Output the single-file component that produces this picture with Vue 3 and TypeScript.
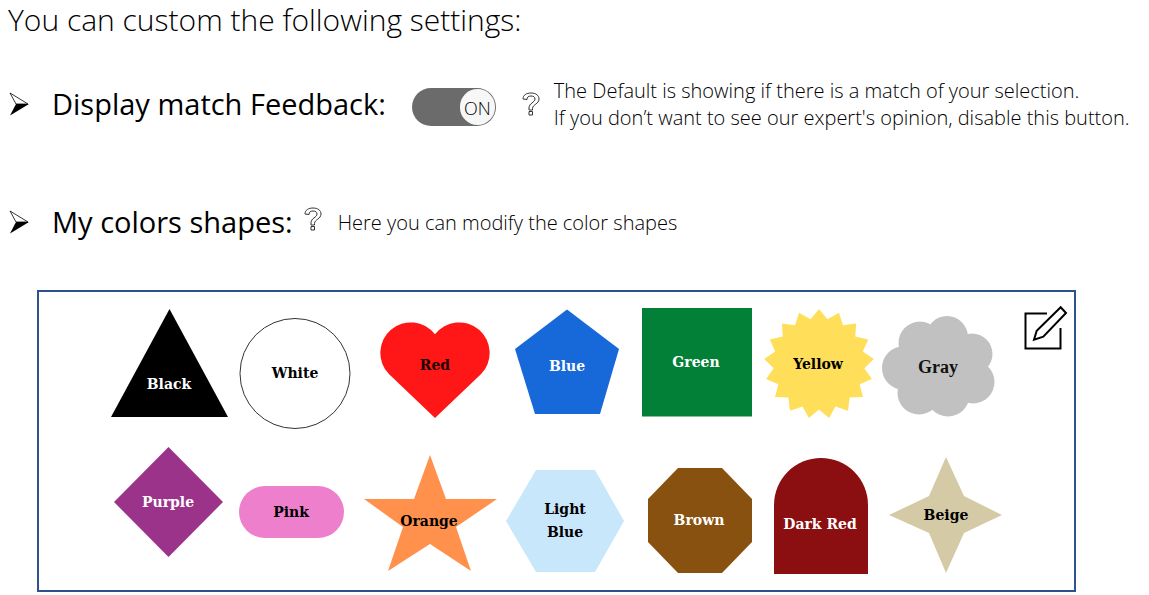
<script setup lang="ts">
import { ref } from 'vue'

interface Label {
  text: string
  x: number
  y: number
}

interface Swatch {
  name: string
  x: number
  y: number
  width: number
  path: string
  fill: string
  stroke?: string
  ink: string
  narrow?: boolean
  labels: Label[]
}

const matchFeedback = ref(true)
const rowHeight = 149

function burst(cx: number, cy: number, spikes: number, outer: number, inner: number): string {
  const points: string[] = []
  for (let i = 0; i < spikes * 2; i++) {
    const r = i % 2 === 0 ? outer : inner
    const a = (Math.PI * i) / spikes - Math.PI / 2
    points.push(`${(cx + r * Math.cos(a)).toFixed(1)} ${(cy + r * Math.sin(a)).toFixed(1)}`)
  }
  return `M${points.join('L')}Z`
}

function disc(cx: number, cy: number, r: number): string {
  return `M${cx - r} ${cy}a${r} ${r} 0 1 1 ${2 * r} 0a${r} ${r} 0 1 1 ${-2 * r} 0Z`
}

const cloud = [
  disc(815, 51, 21.5), disc(842, 45, 21), disc(867, 62, 20.5), disc(868, 90, 21.5),
  disc(843, 103, 21.5), disc(814, 101, 21.5), disc(799, 76, 22), disc(840, 76, 35),
].join('')

const swatches: Swatch[] = [
  { name: 'Black', x: 0, y: 0, width: 128, path: 'M64.5 17L123 125H6Z', fill: '#000000', ink: '#ffffff', labels: [{ text: 'Black', x: 64, y: 97 }] },
  { name: 'White', x: 128, y: 0, width: 124, path: disc(190, 81.5, 55), fill: '#ffffff', stroke: '#333333', ink: '#000000', labels: [{ text: 'White', x: 190, y: 86 }] },
  { name: 'Red', x: 252, y: 0, width: 144, path: 'M330 126L283.900 82.1A30.5 30.5 0 1 1 330 42.3A30.5 30.5 0 1 1 376.1 82.1Z', fill: '#ff1616', ink: '#1c0000', labels: [{ text: 'Red', x: 330, y: 78 }] },
  { name: 'Blue', x: 396, y: 0, width: 132, path: 'M462 17.5L514 57L495 122H430L410 57Z', fill: '#1768d8', ink: '#ffffff', labels: [{ text: 'Blue', x: 462, y: 79 }] },
  { name: 'Green', x: 528, y: 0, width: 126, path: 'M537 16H647V124.5H537Z', fill: '#038037', ink: '#ffffff', labels: [{ text: 'Green', x: 591, y: 75 }] },
  { name: 'Yellow', x: 654, y: 0, width: 118, path: burst(714, 72, 17, 55, 45.5), fill: '#ffde59', ink: '#000000', labels: [{ text: 'Yellow', x: 713, y: 77 }] },
  { name: 'Gray', x: 772, y: 0, width: 128, path: cloud, fill: '#c1c1c1', ink: '#111111', narrow: true, labels: [{ text: 'Gray', x: 833, y: 81 }] },
  { name: 'Purple', x: 0, y: 149, width: 128, path: 'M63.5 155L118 210L63.5 265L9 210Z', fill: '#9c338b', ink: '#ffffff', labels: [{ text: 'Purple', x: 63, y: 215 }] },
  { name: 'Pink', x: 128, y: 149, width: 124, path: 'M160 194H213A26 26 0 0 1 213 246H160A26 26 0 0 1 160 194Z', fill: '#ee7fcd', ink: '#000000', labels: [{ text: 'Pink', x: 186, y: 225 }] },
  { name: 'Orange', x: 252, y: 149, width: 144, path: 'M325 163L341 207H392L351 235L366 279L325 252L283 279L298 235L259 207H309Z', fill: '#ff914d', ink: '#000000', labels: [{ text: 'Orange', x: 324, y: 234 }] },
  { name: 'Light Blue', x: 396, y: 149, width: 132, path: 'M401 229L431 178H490L519 229L490 280H431Z', fill: '#c9e7fa', ink: '#000000', labels: [{ text: 'Light', x: 460, y: 222 }, { text: 'Blue', x: 460, y: 245 }] },
  { name: 'Brown', x: 528, y: 149, width: 126, path: 'M543 207L573 176H617L647 207V250L617 281H573L543 250Z', fill: '#885110', ink: '#ffffff', labels: [{ text: 'Brown', x: 594, y: 233 }] },
  { name: 'Dark Red', x: 654, y: 149, width: 118, path: 'M669 282V213A47 47 0 0 1 763 213V282Z', fill: '#8b0e10', ink: '#ffffff', labels: [{ text: 'Dark Red', x: 715, y: 237 }] },
  { name: 'Beige', x: 772, y: 149, width: 128, path: 'M841 165L859 204L897 223L859 241L841 281L824 241L784 223L824 204Z', fill: '#d4cba6', ink: '#000000', labels: [{ text: 'Beige', x: 841, y: 228 }] },
]
</script>

<template>
  <main class="page">
    <h1 class="title">You can custom the following settings:</h1>

    <section class="setting feedback">
      <svg class="bullet" viewBox="0 0 20 24" aria-hidden="true">
        <path d="M1 1L19 12H7Z" fill="#fff" stroke="#000" stroke-width="0.8" />
        <path d="M7 12H20L1 23.500Z" />
      </svg>
      <h2 class="name">Display match Feedback:</h2>
      <label class="switch">
        <input v-model="matchFeedback" class="switch-input" type="checkbox" role="switch" aria-label="Display match Feedback" />
        <span class="knob">{{ matchFeedback ? 'ON' : 'OFF' }}</span>
      </label>
      <button class="help" type="button" aria-label="Help: match feedback">
        <svg viewBox="0 0 18 24" aria-hidden="true">
          <path d="M1 7C1 3 4.500 1 9 1C14 1 17 3.500 17 7C17 12 10.500 12.500 10.500 16.500V18H7V16C7 11 13 10.500 13 7C13 5 11.500 4 9 4C6.500 4 5 5 5 7.500Z" />
          <path d="M7 19.500H10.500V23H7Z" />
        </svg>
      </button>
      <p class="note">
        The Default is showing if there is a match of your selection.<br />
        If you don’t want to see our expert's opinion, disable this button.
      </p>
    </section>

    <section class="setting colors">
      <svg class="bullet" viewBox="0 0 20 24" aria-hidden="true">
        <path d="M1 1L19 12H7Z" fill="#fff" stroke="#000" stroke-width="0.8" />
        <path d="M7 12H20L1 23.500Z" />
      </svg>
      <h2 class="name">My colors shapes:</h2>
      <button class="help" type="button" aria-label="Help: color shapes">
        <svg viewBox="0 0 18 24" aria-hidden="true">
          <path d="M1 7C1 3 4.500 1 9 1C14 1 17 3.500 17 7C17 12 10.500 12.500 10.500 16.500V18H7V16C7 11 13 10.500 13 7C13 5 11.500 4 9 4C6.500 4 5 5 5 7.500Z" />
          <path d="M7 19.500H10.500V23H7Z" />
        </svg>
      </button>
      <p class="note">Here you can modify the color shapes</p>
    </section>

    <section class="palette" aria-label="Color shapes">
      <div class="swatches">
        <svg
          v-for="s in swatches"
          :key="s.name"
          class="swatch"
          :viewBox="`${s.x} ${s.y} ${s.width} ${rowHeight}`"
        >
          <path :d="s.path" :fill="s.fill" :stroke="s.stroke ?? 'none'" />
          <text
            v-for="l in s.labels"
            :key="l.text"
            :x="l.x"
            :y="l.y"
            :fill="s.ink"
            :class="['label', { narrow: s.narrow }]"
          >{{ l.text }}</text>
        </svg>
      </div>
      <button class="edit" type="button" aria-label="Edit color shapes">
        <svg viewBox="0 0 46 46" aria-hidden="true">
          <path d="M25 8.500H3.500V43.500H38.500V23" />
          <path d="M38.700 2.300L44 8L21.300 31.700L12 34.700L14.700 25.700Z" />
        </svg>
      </button>
    </section>
  </main>
</template>

<style>
body {
  margin: 0;
  background: #fff;
}
</style>

<style scoped>
.page {
  color: #000;
  font-family: "Open Sans", "Noto Sans", sans-serif;
  font-weight: 300;
}

.title {
  margin: 0;
  padding-left: 8px;
  font-size: 30px;
  font-weight: 300;
  line-height: 40px;
}

.setting {
  display: flex;
  align-items: center;
  padding-left: 9px;
}

.feedback {
  min-height: 56px;
  margin-top: 36px;
}

.colors {
  min-height: 40px;
  margin-top: 70px;
}

.bullet {
  flex: none;
  width: 20px;
  height: 24px;
}

.name {
  margin: 0 0 0 23px;
  font-size: 29px;
  font-weight: 400;
  line-height: 40px;
  white-space: nowrap;
}

.switch {
  display: flex;
  flex: none;
  justify-content: flex-end;
  box-sizing: border-box;
  width: 84px;
  height: 38px;
  margin: 6px 0 0 26px;
  padding: 1px;
  border-radius: 19px;
  background: #6b6b6b;
  cursor: pointer;
}

.switch:not(:has(:checked)) {
  justify-content: flex-start;
}

.switch-input {
  width: 0;
  height: 0;
  margin: 0;
  appearance: none;
}

.knob {
  width: 35px;
  height: 36px;
  border-radius: 18px;
  background: #f7f7f7;
  font-size: 18px;
  line-height: 38px;
  text-align: center;
}

.help {
  flex: none;
  width: 18px;
  height: 24px;
  padding: 0;
  border: 0;
  background: none;
}

.feedback .help {
  margin-left: 26px;
}

.colors .help {
  margin: 0 2px 6px 11px;
}

.help svg {
  display: block;
  fill: #fff;
  stroke: #333;
  stroke-width: 1;
}

.note {
  margin: 0 0 0 14px;
  font-size: 20px;
  line-height: 27px;
}

.palette {
  display: flex;
  align-items: flex-start;
  margin: 48px 73px 0 37px;
  padding-left: 66px;
  border: 2px solid #2f528f;
}

.swatches {
  display: grid;
  flex: 1;
  grid-template-columns: 128fr 124fr 144fr 132fr 126fr 118fr 128fr;
}

.swatch {
  display: block;
  width: 100%;
}

.label {
  font-family: "DejaVu Serif", serif;
  font-size: 14px;
  font-weight: 700;
  text-anchor: middle;
}

.narrow {
  font-family: "Liberation Serif", serif;
  font-size: 18px;
}

.edit {
  flex: none;
  width: 46px;
  height: 46px;
  margin: 13px 6px 0 17px;
  padding: 0;
  border: 0;
  background: none;
}

.edit svg {
  display: block;
  fill: none;
  stroke: #000;
  stroke-width: 2;
}
</style>
